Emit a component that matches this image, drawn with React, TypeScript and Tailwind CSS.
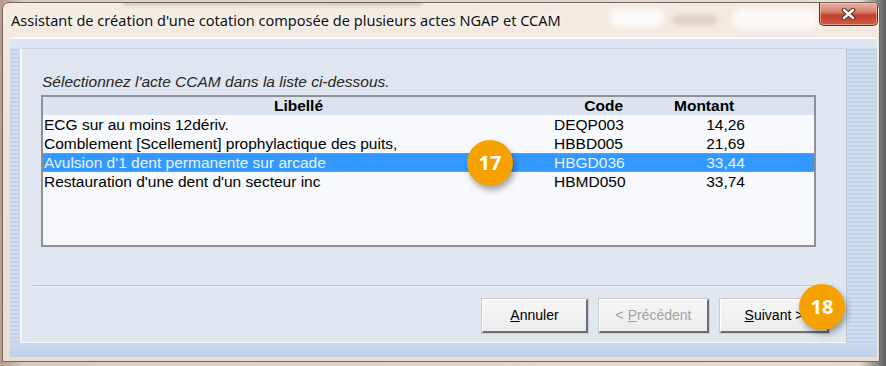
import React from 'react';

type Row = { label: string; code: string; amount: string; selected?: boolean };

const ROWS: Row[] = [
  { label: 'ECG sur au moins 12dériv.', code: 'DEQP003', amount: '14,26' },
  { label: 'Comblement [Scellement] prophylactique des puits,', code: 'HBBD005', amount: '21,69' },
  { label: "Avulsion d'1 dent permanente sur arcade", code: 'HBGD036', amount: '33,44', selected: true },
  { label: "Restauration d'une dent d'un secteur inc", code: 'HBMD050', amount: '33,74' },
];

function Badge({ n, className }: { n: number; className: string }) {
  return (
    <div
      className={`absolute grid h-[46px] w-[46px] place-items-center rounded-full bg-[#f5a100] text-[20px] font-bold leading-none text-white shadow-[2px_4px_6px_rgba(0,0,0,0.35)] [font-family:'Open_Sans',sans-serif] ${className}`}
    >
      {n}
    </div>
  );
}

function WinButton({ children, disabled = false, width }: { children: React.ReactNode; disabled?: boolean; width: string }) {
  return (
    <div
      className={`flex h-[34px] items-center justify-center border-t border-l border-r-2 border-b-2 border-t-[#fdfdfd] border-l-[#fdfdfd] border-r-[#6f6f6f] border-b-[#6f6f6f] bg-[linear-gradient(180deg,#f5f5f5,#ececec)] shadow-[0_0_0_1px_#c9ccd0] text-[14px] ${
        disabled ? 'text-[#a3a3a3]' : 'text-black'
      } ${width}`}
    >
      {children}
    </div>
  );
}

export default function App() {
  return (
    <div className="relative h-[366px] w-[886px] overflow-hidden bg-[linear-gradient(90deg,#b99a8c,#d9cdc2_3%,#e6ddd2_97%,#5d5d5d)] pl-[2px] pt-[2px] [font-family:'Liberation_Sans',Arial,sans-serif]">
      {/* window */}
      <div className="relative flex h-[360px] w-[878px] flex-col overflow-hidden rounded-t-[7px] border border-[#6e6660] bg-[linear-gradient(180deg,#f4ebe2,#eee2d6_40%,#e9ddd0)]">
        {/* blurred glass spots */}
        <div className="pointer-events-none absolute left-[608px] top-[6px] h-[18px] w-[52px] rounded-md bg-white/80 blur-[3px]" />
        <div className="pointer-events-none absolute left-[730px] top-[6px] h-[20px] w-[84px] rounded-md bg-white/75 blur-[3px]" />
        <div className="pointer-events-none absolute left-[670px] top-[13px] h-[8px] w-[44px] rounded bg-[#b9aa9c]/50 blur-[3px]" />
        <div className="pointer-events-none absolute left-[120px] top-[-4px] h-[6px] w-[300px] rounded bg-[#8e7f74]/40 blur-[2px]" />

        {/* title bar */}
        <div className="relative flex h-[34px] items-start">
          <div className="pl-[8px] pt-[8px] text-[14.55px] leading-[18px] text-[#111] [font-family:'Noto_Sans',sans-serif] [text-shadow:0_0_6px_#fff,0_0_10px_#fff]">
            Assistant de création d'une cotation composée de plusieurs actes NGAP et CCAM
          </div>
          <div className="ml-auto mr-[1px] grid h-[23px] w-[59px] place-items-center rounded-b-[5px] border border-t-0 border-[#6b2c22] bg-[linear-gradient(180deg,#eab0a2_0%,#d7826f_40%,#c5412c_55%,#d05a43_100%)] shadow-[inset_0_0_0_1px_rgba(255,210,200,0.5)]">
            <svg width="15" height="12" viewBox="0 0 15 12">
              <path d="M3 2 L12 10 M12 2 L3 10" stroke="#4a2a28" strokeWidth="4.6" strokeLinecap="round" />
              <path d="M3 2 L12 10 M12 2 L3 10" stroke="#ffffff" strokeWidth="2.6" strokeLinecap="round" />
            </svg>
          </div>
        </div>

        {/* frame body */}
        <div className="mb-[4px] ml-[7px] mr-[2px] flex flex-1 flex-col">
          <div className="h-[11px] border-t-2 border-t-[#f7f9fc] bg-[#dce5f0]" />
          <div className="flex flex-1">
            <div className="w-[10px] bg-[repeating-linear-gradient(0deg,#c3d4ea_0px,#c3d4ea_2px,#cfddef_2px,#cfddef_4px)]" />
            {/* client panel */}
            <div className="flex flex-1 flex-col border-t border-r border-b border-l-2 border-t-[#c7d0dc] border-r-[#bfc8d4] border-b-[#f6f8fb] border-l-[#f6f8fb] bg-[linear-gradient(180deg,#dfe6ef,#e0e7f0)]">
              <div className="ml-[20px] mt-[25px] text-[15.5px] italic leading-[16px] text-[#262626]">
                Sélectionnez l'acte CCAM dans la liste ci-dessous.
              </div>

              {/* list */}
              <div className="ml-[19px] mt-[5px] h-[152px] w-[775px] border-2 border-[#8d9095] bg-[#f7f9fc] text-[15.5px] leading-[19px] text-black">
                <div className="grid h-[18px] grid-cols-[511px_72px_122px] items-center bg-[#dae3ef] font-bold leading-[18px]">
                  <div className="text-center">Libellé</div>
                  <div className="pr-[3px] text-right">Code</div>
                  <div className="pl-[48px]">Montant</div>
                </div>
                {ROWS.map((r) => (
                  <div
                    key={r.code}
                    className={`grid h-[19px] grid-cols-[511px_72px_122px] items-center ${
                      r.selected ? 'border-y border-dotted border-[#c79a6c] bg-[#3399ff] leading-[17px] text-[#e6f1ff]' : ''
                    }`}
                  >
                    <div className="truncate pl-px">{r.label}</div>
                    <div className="pr-[3px] text-right">{r.code}</div>
                    <div className="pr-[3px] text-right">{r.amount}</div>
                  </div>
                ))}
              </div>

              {/* separator */}
              <div className="ml-[11px] mt-[38px] w-[800px] border-t border-b border-t-[#c1c6cc] border-b-[#eef2f7]" />

              {/* buttons */}
              <div className="mt-[12px] flex justify-end gap-[11px] pr-[17px]">
                <WinButton width="w-[106px]">
                  <span>
                    <span className="underline">A</span>nnuler
                  </span>
                </WinButton>
                <WinButton width="w-[110px]" disabled>
                  <span>
                    &lt; <span className="underline">P</span>récédent
                  </span>
                </WinButton>
                <WinButton width="w-[109px]">
                  <span>
                    <span className="underline">S</span>uivant &gt;
                  </span>
                </WinButton>
              </div>
            </div>
            <div className="w-[30px] bg-[repeating-linear-gradient(0deg,#c3d4ea_0px,#c3d4ea_2px,#cfddef_2px,#cfddef_4px)]" />
          </div>
          <div className="h-[14px] bg-[linear-gradient(180deg,#c9d9ee,#bed0e8)]" />
        </div>
      </div>

      <Badge n={17} className="left-[467px] top-[140px]" />
      <Badge n={18} className="left-[799px] top-[284px]" />
    </div>
  );
}
